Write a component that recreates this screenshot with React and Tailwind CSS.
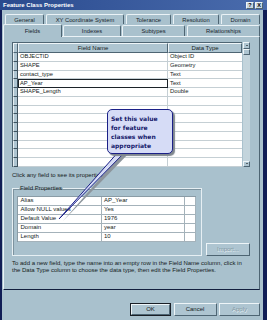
import React from 'react'

const topTabs = [
    { label: 'General', w: 'w-[39px]' },
    { label: 'XY Coordinate System', w: 'w-[78px]' },
    { label: 'Tolerance', w: 'w-[45px]' },
    { label: 'Resolution', w: 'w-[46px]' },
    { label: 'Domain', w: 'w-[39px]' },
]

const fieldRows = [
    ['OBJECTID', 'Object ID'],
    ['SHAPE', 'Geometry'],
    ['contact_type', 'Text'],
    ['AP_Year', 'Text'],
    ['SHAPE_Length', 'Double'],
    ['', ''], ['', ''], ['', ''], ['', ''], ['', ''], ['', ''], ['', ''], ['', ''],
]

const props = [
    ['Alias', 'AP_Year'],
    ['Allow NULL values', 'Yes'],
    ['Default Value', '1976'],
    ['Domain', 'year'],
    ['Length', '10'],
]

const bevel = 'border-t border-l border-t-[#eef5f8] border-l-[#eef5f8] border-r border-b border-r-[#4e6573] border-b-[#4e6573]'

const Tab = ({ label, w, h = 'h-[10px]', extra = '' }) => (
    <div className={`${w} ${h} ${extra} shrink-0 bg-[#a9c1cd] border-t border-l border-[#eaf2f6] border-r border-r-[#4e6573] rounded-t-[2px] flex items-center justify-center text-[5.8px] leading-[8px] text-[#17242c] whitespace-nowrap`}>
        {label}
    </div>
)

const Button = ({ children, w, isDefault, disabled }) => (
    <div className={`${w} h-[13px] ${isDefault ? 'border border-[#1a1f26]' : ''}`}>
        <div className={`h-full w-full bg-[#aec5d1] ${bevel} flex items-center justify-center text-[6px] leading-[7px] ${disabled ? 'text-[#7f95a1] [text-shadow:0.5px_0.5px_0_#e6eff3]' : 'text-[#141c22]'}`}>
            {children}
        </div>
    </div>
)

export default function App() {
    return (
        <div className="relative w-[267px] h-[320px] overflow-hidden bg-[#101d55] font-['Liberation_Sans',Arial,sans-serif]">
            {/* title bar */}
            <div className="h-[10px] flex items-center bg-gradient-to-r from-[#2a4a8e] to-[#4a6cad] pl-[3px] pr-[4px]">
                <span className="text-[6px] leading-[10px] font-bold text-white">Feature Class Properties</span>
                <div className="ml-auto flex gap-[1px]">
                    <div className={`w-[8px] h-[7px] bg-[#c9d6de] ${bevel} flex items-center justify-center text-[5.5px] leading-[6px] font-bold text-black`}>?</div>
                    <div className={`w-[8px] h-[7px] bg-[#c9d6de] ${bevel} flex items-center justify-center text-[5.5px] leading-[6px] font-bold text-black`}>X</div>
                </div>
            </div>

            {/* dialog body */}
            <div className="ml-[2px] w-[261px] h-[310px] bg-[#a9c1cd] pt-[4px]">
                <div className="flex gap-[2px] pl-[3px]">
                    {topTabs.map((t) => (
                        <Tab key={t.label} {...t} />
                    ))}
                </div>
                <div className="flex items-end gap-[1px] pl-[1px] h-[12px]">
                    <Tab label="Fields" w="w-[59px]" h="h-[13px]" extra="relative z-10 -mb-[1px]" />
                    <Tab label="Indexes" w="w-[58px]" h="h-[11px]" />
                    <Tab label="Subtypes" w="w-[63px]" h="h-[11px]" />
                    <Tab label="Relationships" w="w-[73px]" h="h-[11px]" extra="ml-[1px]" />
                </div>

                {/* tab panel */}
                <div className="ml-[1px] w-[257px] h-[254px] border-t border-l border-[#eaf2f6] border-r border-r-[#4e6573] border-b-[1.5px] border-b-[#14203f] pl-[8px] pt-[5px] text-[#141c22]">
                    {/* field grid */}
                    <div className="flex w-[238px]">
                        <div className="w-[230px] bg-white border-l border-t border-[#4e6573]">
                            <div className="flex h-[10px]">
                                <div className={`w-[5px] shrink-0 bg-[#aec5d1] ${bevel}`} />
                                <div className={`w-[150px] shrink-0 bg-[#aec5d1] ${bevel} flex items-center justify-center text-[6px] leading-[7px]`}>Field Name</div>
                                <div className={`w-[74px] shrink-0 bg-[#aec5d1] ${bevel} flex items-center justify-center text-[6px] leading-[7px]`}>Data Type</div>
                            </div>
                            {fieldRows.map((r, i) => (
                                <div key={i} className="flex h-[8.75px]">
                                    <div className="w-[5px] shrink-0 bg-[#aec5d1] border-r border-b border-[#3d525e] border-l border-l-[#e6eff3]" />
                                    <div className={`w-[150px] shrink-0 border-b border-r border-[#c5cfd4] pl-[2px] flex items-center text-[5.8px] leading-[7px] ${i === 3 ? 'outline outline-1 -outline-offset-1 outline-[#1c2329]' : ''}`}>{r[0]}</div>
                                    <div className="w-[74px] shrink-0 border-b border-[#c5cfd4] pl-[2px] flex items-center text-[5.8px] leading-[7px]">{r[1]}</div>
                                </div>
                            ))}
                        </div>
                        <div className="w-[7px] ml-[1px] flex flex-col bg-[#c3d4dc]">
                            <div className={`h-[7px] bg-[#aec5d1] ${bevel} flex items-center justify-center`}>
                                <div className="w-0 h-0 border-l-[1.5px] border-r-[1.5px] border-b-[1.5px] border-l-transparent border-r-transparent border-b-black" />
                            </div>
                            <div className={`h-[6px] bg-[#aec5d1] ${bevel}`} />
                            <div className="flex-1" />
                            <div className={`h-[6px] bg-[#aec5d1] ${bevel} flex items-center justify-center`}>
                                <div className="w-0 h-0 border-l-[1.5px] border-r-[1.5px] border-t-[1.5px] border-l-transparent border-r-transparent border-t-black" />
                            </div>
                        </div>
                    </div>

                    <p className="mt-[5px] text-[6px] leading-[7px]">Click any field to see its properties.</p>

                    <div className="flex mt-[6.5px]">
                        <fieldset className="w-[190px] border border-[#e6eff3] shadow-[inset_1px_1px_0_#7d939f] pl-[4px] pr-[5px] pb-[7px]">
                            <legend className="ml-[2px] px-[1px] text-[6px] leading-[7px]">Field Properties</legend>
                            <div className="mt-[3.5px] w-[179px] bg-white border-l border-t border-[#8a9ca6]">
                                {props.map((p) => (
                                    <div key={p[0]} className="flex h-[9px]">
                                        <div className="w-[84px] shrink-0 border-r border-b border-[#a4b2ba] pl-[2.5px] flex items-center text-[6px] leading-[7px] whitespace-nowrap overflow-hidden">{p[0]}</div>
                                        <div className="w-[83px] shrink-0 border-r border-b border-[#a4b2ba] pl-[2px] flex items-center text-[6px] leading-[7px]">{p[1]}</div>
                                        <div className="w-[11px] shrink-0 border-r border-b border-[#a4b2ba]" />
                                    </div>
                                ))}
                            </div>
                        </fieldset>
                        <div className="ml-[4px] mt-[57.5px]">
                            <Button w="w-[44px]" disabled>Import...</Button>
                        </div>
                    </div>

                    <p className="mt-[4.5px] w-[244px] text-[6px] leading-[6.6px] whitespace-nowrap">
                        To add a new field, type the name into an empty row in the Field Name column, click in
                        <br />
                        the Data Type column to choose the data type, then edit the Field Properties.
                    </p>
                </div>

                {/* dialog buttons */}
                <div className="mt-[13px] flex justify-end gap-[2.5px] pr-[3px]">
                    <Button w="w-[41px]" isDefault>OK</Button>
                    <Button w="w-[43px]">Cancel</Button>
                    <Button w="w-[41px]" disabled>Apply</Button>
                </div>
            </div>

            {/* callout */}
            <svg className="absolute left-0 top-0 pointer-events-none" width="267" height="320" viewBox="0 0 267 320">
                <polygon points="122,150 129,150 61,220" fill="#8d959c" transform="translate(2,1)" />
                <polygon points="120,150 127,150 59,219" fill="#d6dcf6" stroke="#1b2088" strokeWidth="1" strokeLinejoin="round" />
            </svg>
            <div className="absolute left-[107px] top-[109px] w-[66px] h-[45px] rounded-[5px] bg-[#d6dcf6] border-[1.5px] border-[#1b2088] shadow-[2px_2px_1px_#7f878e] pl-[3px] pt-[3.5px] font-['DejaVu_Sans',sans-serif] text-[6px] leading-[9px] font-bold text-[#14186a]">
                <div>Set this value</div>
                <div>for feature</div>
                <div>classes when</div>
                <div>appropriate</div>
            </div>
        </div>
    )
}
